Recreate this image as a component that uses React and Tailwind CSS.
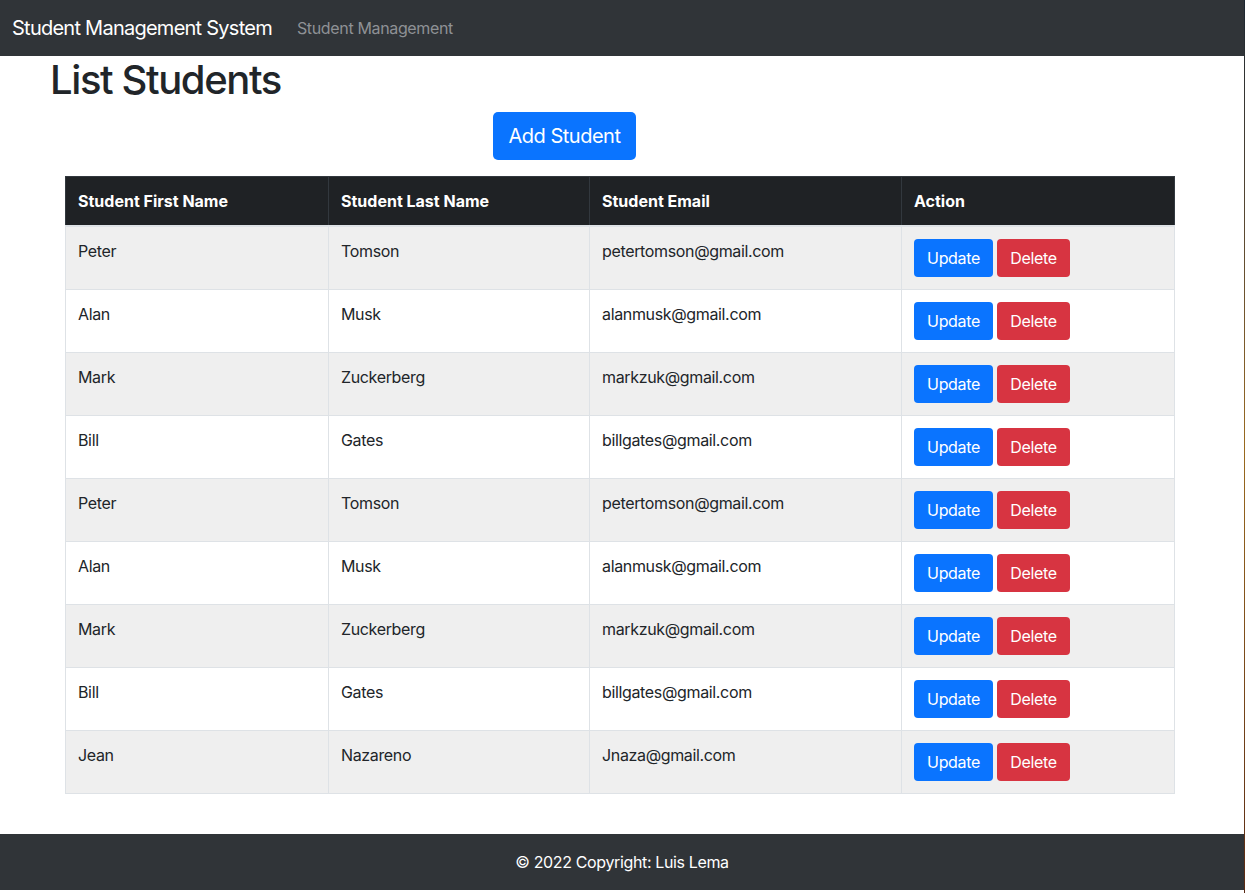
import React from "react";

const rows = [
  ["Peter", "Tomson", "petertomson@gmail.com"],
  ["Alan", "Musk", "alanmusk@gmail.com"],
  ["Mark", "Zuckerberg", "markzuk@gmail.com"],
  ["Bill", "Gates", "billgates@gmail.com"],
  ["Peter", "Tomson", "petertomson@gmail.com"],
  ["Alan", "Musk", "alanmusk@gmail.com"],
  ["Mark", "Zuckerberg", "markzuk@gmail.com"],
  ["Bill", "Gates", "billgates@gmail.com"],
  ["Jean", "Nazareno", "Jnaza@gmail.com"],
];

export default function App() {
  return (
    <div
      className="flex w-[1245px] h-[893px] bg-white text-[#212529] overflow-hidden"
      style={{ fontFamily: "Inter, 'Noto Sans', 'Liberation Sans', sans-serif" }}
    >
      <div className="w-[1244px] flex flex-col">
        <nav className="h-[56px] bg-[#303438] flex items-center px-[12px]">
          <span className="text-white text-[20px] leading-[30px] tracking-[-0.75px]">
            Student Management System
          </span>
          <span className="ml-[25px] text-[16px] text-[#8e9195] tracking-[-0.35px]">
            Student Management
          </span>
        </nav>
        <h1 className="pl-[50px] text-[40px] leading-[48px] font-medium tracking-[-1.4px]">
          List Students
        </h1>
        <div className="mt-[8px] pl-[493px]">
          <button className="h-[48px] w-[143px] rounded-[5px] bg-[#0a74ff] text-white text-[20px] tracking-[-0.5px]">
            Add Student
          </button>
        </div>
        <div className="mt-[16px] ml-[65px] w-[1110px]">
          <table className="w-full border-collapse text-[16px] tracking-[-0.35px]">
            <thead>
              <tr className="bg-[#1f2225] text-white h-[49px] tracking-[0px]">
                <th className="w-[263px] text-left font-bold px-[12px] border border-[#32383e] border-b-2 border-b-[#dee2e6]">
                  Student First Name
                </th>
                <th className="w-[261px] text-left font-bold px-[12px] border border-[#32383e] border-b-2 border-b-[#dee2e6]">
                  Student Last Name
                </th>
                <th className="w-[312px] text-left font-bold px-[12px] border border-[#32383e] border-b-2 border-b-[#dee2e6]">
                  Student Email
                </th>
                <th className="text-left font-bold px-[12px] border border-[#32383e] border-b-2 border-b-[#dee2e6]">
                  Action
                </th>
              </tr>
            </thead>
            <tbody>
              {rows.map((r, i) => (
                <tr key={i} className={i % 2 === 0 ? "bg-[#efefef]" : "bg-white"}>
                  <td className="align-top px-[12px] pt-[12px] leading-[24px] border border-[#dee2e6] h-[63px]">
                    {r[0]}
                  </td>
                  <td className="align-top px-[12px] pt-[12px] leading-[24px] border border-[#dee2e6]">
                    {r[1]}
                  </td>
                  <td className="align-top px-[12px] pt-[12px] leading-[24px] border border-[#dee2e6]">
                    {r[2]}
                  </td>
                  <td className="align-top px-[12px] py-[12px] border border-[#dee2e6]">
                    <div className="flex gap-[4px]">
                      <button className="h-[38px] w-[79px] rounded-[4px] bg-[#0a74ff] text-white text-[16px] tracking-[-0.35px]">
                        Update
                      </button>
                      <button className="h-[38px] w-[73px] rounded-[4px] bg-[#d73441] text-white text-[16px] tracking-[-0.35px]">
                        Delete
                      </button>
                    </div>
                  </td>
                </tr>
              ))}
            </tbody>
          </table>
        </div>
        <div className="flex-1" />
        <footer className="h-[56px] bg-[#303438] flex items-center justify-center text-white text-[16px] tracking-[-0.36px]">
          © 2022 Copyright: Luis Lema
        </footer>
        <div className="h-[3px]" />
      </div>
      <div className="w-[1px] bg-gradient-to-b from-[#1c2630] via-[#9a6a1e] to-[#5a2a14]" />
    </div>
  );
}
